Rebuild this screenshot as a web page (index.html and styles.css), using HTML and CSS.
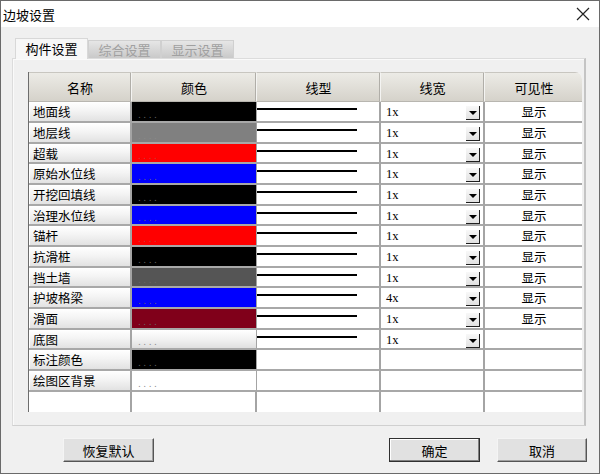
FILE: index.html
```html
<!DOCTYPE html>
<html lang="zh">
<head>
<meta charset="utf-8">
<title>边坡设置</title>
<link rel="stylesheet" href="styles.css">
</head>
<body>
<div class="window">
  <div class="titlebar">
    <span class="title">边坡设置</span>
    <svg class="close" width="14" height="14" viewBox="0 0 14 14"><path d="M1 1 L13 13 M13 1 L1 13" stroke="#222" stroke-width="1.2" fill="none"/></svg>
  </div>
  <div class="tabs">
    <div class="tab active">构件设置</div>
    <div class="tab">综合设置</div>
    <div class="tab">显示设置</div>
  </div>
  <div class="panel">
    <div class="grid">
      <div class="hd">名称</div><div class="hd">颜色</div><div class="hd">线型</div><div class="hd">线宽</div><div class="hd last">可见性</div>

      <div class="name">地面线</div><div class="color c-black"><span class="dots">....</span></div><div class="ltype"><i class="line"></i></div><div class="width"><span>1x</span><b class="dd"></b></div><div class="vis">显示</div>
      <div class="name">地层线</div><div class="color c-gray"><span class="dots">....</span></div><div class="ltype"><i class="line"></i></div><div class="width"><span>1x</span><b class="dd"></b></div><div class="vis">显示</div>
      <div class="name">超载</div><div class="color c-red"><span class="dots">....</span></div><div class="ltype"><i class="line"></i></div><div class="width"><span>1x</span><b class="dd"></b></div><div class="vis">显示</div>
      <div class="name">原始水位线</div><div class="color c-blue"><span class="dots">....</span></div><div class="ltype"><i class="line"></i></div><div class="width"><span>1x</span><b class="dd"></b></div><div class="vis">显示</div>
      <div class="name">开挖回填线</div><div class="color c-black"><span class="dots">....</span></div><div class="ltype"><i class="line"></i></div><div class="width"><span>1x</span><b class="dd"></b></div><div class="vis">显示</div>
      <div class="name">治理水位线</div><div class="color c-blue"><span class="dots">....</span></div><div class="ltype"><i class="line"></i></div><div class="width"><span>1x</span><b class="dd"></b></div><div class="vis">显示</div>
      <div class="name">锚杆</div><div class="color c-red"><span class="dots">....</span></div><div class="ltype"><i class="line"></i></div><div class="width"><span>1x</span><b class="dd"></b></div><div class="vis">显示</div>
      <div class="name">抗滑桩</div><div class="color c-black"><span class="dots">....</span></div><div class="ltype"><i class="line"></i></div><div class="width"><span>1x</span><b class="dd"></b></div><div class="vis">显示</div>
      <div class="name">挡土墙</div><div class="color c-dgray"><span class="dots">....</span></div><div class="ltype"><i class="line"></i></div><div class="width"><span>1x</span><b class="dd"></b></div><div class="vis">显示</div>
      <div class="name">护坡格梁</div><div class="color c-blue"><span class="dots">....</span></div><div class="ltype"><i class="line"></i></div><div class="width"><span>4x</span><b class="dd"></b></div><div class="vis">显示</div>
      <div class="name">滑面</div><div class="color c-maroon"><span class="dots">....</span></div><div class="ltype"><i class="line"></i></div><div class="width"><span>1x</span><b class="dd"></b></div><div class="vis">显示</div>
      <div class="name">底图</div><div class="color c-btn"><span class="dots">....</span></div><div class="ltype"><i class="line"></i></div><div class="width"><span>1x</span><b class="dd"></b></div><div class="vis"></div>
      <div class="name">标注颜色</div><div class="color c-black"><span class="dots">....</span></div><div class="ltype"></div><div class="width"></div><div class="vis"></div>
      <div class="name">绘图区背景</div><div class="color c-white"><span class="dots">....</span></div><div class="ltype"></div><div class="width"></div><div class="vis"></div>
      <div class="empty"></div><div class="empty"></div><div class="empty"></div><div class="empty"></div><div class="empty lastcol"></div>
    </div>
  </div>
  <div class="buttons">
    <button class="btn reset">恢复默认</button>
    <button class="btn ok">确定</button>
    <button class="btn cancel">取消</button>
  </div>
</div>
</body>
</html>
```

FILE: styles.css
```css
* { box-sizing: border-box; }
html, body { margin: 0; padding: 0; }
body {
  width: 600px; height: 474px; overflow: hidden;
  font-family: "Noto Sans CJK SC", "Noto Sans", sans-serif;
  font-size: 12.5px; color: #000;
}
.window {
  width: 600px; height: 474px;
  border: 1px solid #6a6a6a;
  background: #f0f0f0;
  display: flex; flex-direction: column;
}
.titlebar {
  height: 26px; background: #fff;
  display: flex; align-items: center; justify-content: space-between;
  padding: 0 9px 0 2px;
  flex: none;
}
.title { font-size: 13px; line-height: 1; }
.close { display: block; }

.tabs {
  margin-top: 11px; margin-left: 14px;
  height: 20px; display: flex; align-items: flex-end;
  position: relative; z-index: 1; flex: none;
}
.tab {
  width: 73px; height: 18px;
  font-size: 13px; line-height: 18px; text-align: center;
  color: #a0a0a0;
  background: linear-gradient(#e6e6e6, #c9c9c9);
  border: 1px solid #d0d0d0; border-bottom: none;
  margin-right: 0;
}
.tab.active {
  width: 73px; height: 21px; margin-bottom: -1px;
  color: #000; background: #f7f7f7;
  border-color: #d8d8d8;
  line-height: 20px;
}
.panel {
  margin-left: 11px; width: 574px; height: 368px; flex: none;
  border: 1px solid #dcdcdc;
  border-right: 2px solid #c4c4c4;
  border-bottom: 1px solid #d0d0d0;
  box-shadow: inset 1px 1px #fafafa;
  padding: 13px 0 0 15px;
}
.grid {
  width: 554px; height: 340px;
  display: grid;
  grid-template-columns: 103px 125px 124px 104px 98px;
  grid-template-rows: 30px repeat(5, 21px 21px 20px);
  border-left: 1px solid #6d6d6d;
  background: #fff;
  overflow: hidden;
  border-top-right-radius: 7px;
}
.grid > div { border-right: 2px solid #a4a4a4; border-bottom: 2px solid #a8a8a8; position: relative; }
.grid > .hd {
  background: linear-gradient(#ecebe6, #d5d2ca);
  border-right: 1px solid #f4f4f2;
  border-bottom: 1px solid #b8b6b0;
  border-top: 1px solid #c8c6c0;
  font-size: 13px;
  display: flex; align-items: center; justify-content: center;
  box-shadow: inset -1px 0 #b0aea8;
}
.grid > .hd.last { border-right: none; box-shadow: none; }
.grid > .name {
  background: linear-gradient(#ffffff, #f4f4f4 45%, #e2e2e2);
  padding-left: 4px; line-height: 19px;
  box-shadow: inset 1px 1px #fff;
}
.grid > .color { border-right: 1px solid #a4a4a4; }
.dots {
  position: absolute; left: 6px; bottom: 1px;
  font-size: 9px; letter-spacing: 2.5px; line-height: 9px;
  color: #8a8a8a; font-family: "DejaVu Sans", sans-serif;
}
.c-black { background: #000; }
.c-gray { background: #808080; }
.c-red { background: #ff0000; }
.c-blue { background: #0000ff; }
.c-dgray { background: #555555; }
.c-maroon { background: #80001a; }
.c-btn { background: linear-gradient(#ffffff, #f2f2f2 50%, #e0e0e0); }
.c-white { background: #fff; }
.c-black .dots, .c-blue .dots, .c-maroon .dots, .c-dgray .dots { color: #666; }
.c-red .dots { color: #c04040; }

.ltype { background: #fff; }
.line {
  position: absolute; left: 0; top: 6px;
  width: 100px; height: 2px; background: #000;
  display: block;
}
.width { background: #fff; }
.width span {
  position: absolute; left: 5px; top: 3px;
  font-family: "Liberation Serif", serif; font-size: 12.5px; line-height: 14px;
}
.dd {
  position: absolute; left: 85px; top: 4px;
  width: 14px; height: 14px;
  background: linear-gradient(#f8f8f8, #e2e2e2);
  border-right: 1px solid #202020; border-bottom: 1px solid #202020;
}
.dd::after {
  content: ""; position: absolute; left: 3px; top: 5px;
  border-left: 4px solid transparent; border-right: 4px solid transparent;
  border-top: 4px solid #000;
}
.vis { background: #fff; text-align: center; line-height: 19px; }
.grid > .vis { border-right: none; }
.grid > .empty { background: #fff; border-bottom: none; }
.grid > .empty.lastcol { border-right: none; }

.buttons {
  margin-top: 12px; height: 24px; display: flex; flex: none;
}
.btn {
  font-family: "Noto Sans CJK SC", sans-serif; font-size: 13px;
  width: 91px; height: 24px; padding: 0;
  background: #e1e1e1; color: #000;
  border: 1px solid #adadad;
  border-top-color: #f4f4f4; border-left-color: #f4f4f4;
  border-right-color: #555; border-bottom-color: #555;
  box-shadow: inset -1px -1px #a0a0a0;
}
.reset { margin-left: 62px; }
.ok { margin-left: 235px; width: 91px; border: 1px solid #303030; box-shadow: inset -1px -1px #808080, inset 1px 1px #fff; }
.cancel { margin-left: 17px; width: 90px; }
```
